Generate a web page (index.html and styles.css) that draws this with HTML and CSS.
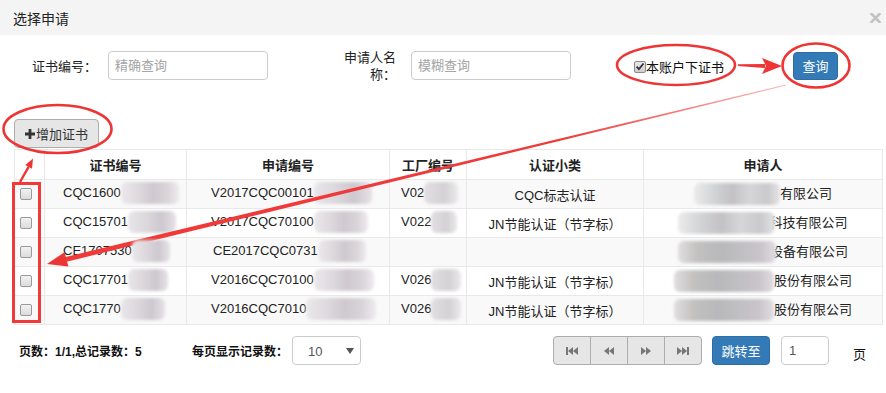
FILE: index.html
```html
<!DOCTYPE html>
<html lang="zh-CN">
<head>
<meta charset="utf-8">
<title>选择申请</title>
<link rel="stylesheet" href="styles.css">
</head>
<body>
<div class="modal">
  <div class="modal-header">
    <span class="modal-title">选择申请</span>
    <svg class="close" width="11" height="10" viewBox="0 0 11 10"><path d="M1.5 1 L9.5 9 M9.5 1 L1.5 9" stroke="#c2c2c2" stroke-width="2.6" stroke-linecap="square"/></svg>
  </div>

  <div class="search-row">
    <label class="lbl lbl-cert">证书编号：</label>
    <input class="txt txt-cert" type="text" placeholder="精确查询">
    <label class="lbl lbl-app">申请人名称：</label>
    <input class="txt txt-app" type="text" placeholder="模糊查询">
    <span class="own">
      <span class="chk chk-on"><svg width="11" height="11" viewBox="0 0 11 11"><path d="M1.8 5.6 L4.3 8.3 L9.4 2.2" fill="none" stroke="#333" stroke-width="2"/></svg></span>本账户下证书
    </span>
    <button class="btn btn-primary btn-query">查询</button>
  </div>

  <div class="tool-row">
    <button class="btn btn-default btn-add"><svg class="plus" width="10" height="10" viewBox="0 0 10 10"><path d="M3.6 0h2.8v3.6H10v2.8H6.4V10H3.6V6.4H0V3.6h3.6z" fill="#333"/></svg>增加证书</button>
  </div>

  <table class="grid">
    <colgroup>
      <col class="c-chk"><col class="c-cert"><col class="c-app"><col class="c-fac"><col class="c-type"><col class="c-man">
    </colgroup>
    <thead>
      <tr><th></th><th>证书编号</th><th>申请编号</th><th>工厂编号</th><th>认证小类</th><th>申请人</th></tr>
    </thead>
    <tbody>
      <tr>
        <td class="td-chk"><span class="chk"></span></td>
        <td class="td-cert">CQC1600<span class="blur b1" style="width:58px"></span></td>
        <td class="td-app">V2017CQC00101<span class="blur b2" style="width:58px"></span></td>
        <td class="td-fac">V02<span class="blur b3" style="width:34px"></span></td>
        <td class="td-type">CQC标志认证</td>
        <td class="td-man"><span class="blur b4" style="width:86px"></span>有限公司</td>
      </tr>
      <tr>
        <td class="td-chk"><span class="chk"></span></td>
        <td class="td-cert">CQC15701<span class="blur b2" style="width:48px"></span></td>
        <td class="td-app">V2017CQC70100<span class="blur b1" style="width:54px"></span></td>
        <td class="td-fac">V022<span class="blur b3 over" style="width:26px"></span></td>
        <td class="td-type">JN节能认证（节字标）</td>
        <td class="td-man"><span class="blur b4 over" style="width:97px"></span>科技有限公司</td>
      </tr>
      <tr>
        <td class="td-chk"><span class="chk"></span></td>
        <td class="td-cert">CE1707530<span class="blur b2 over" style="width:38px"></span></td>
        <td class="td-app app-ce">CE2017CQC0731<span class="blur b1 over" style="width:48px"></span></td>
        <td class="td-fac"></td>
        <td class="td-type"></td>
        <td class="td-man"><span class="blur b5 over" style="width:98px"></span>设备有限公司</td>
      </tr>
      <tr>
        <td class="td-chk"><span class="chk"></span></td>
        <td class="td-cert">CQC17701<span class="blur b2" style="width:40px"></span></td>
        <td class="td-app">V2016CQC70100<span class="blur b1" style="width:60px"></span></td>
        <td class="td-fac">V026<span class="blur b3" style="width:30px"></span></td>
        <td class="td-type">JN节能认证（节字标）</td>
        <td class="td-man"><span class="blur b5" style="width:100px"></span>股份有限公司</td>
      </tr>
      <tr>
        <td class="td-chk"><span class="chk"></span></td>
        <td class="td-cert">CQC1770<span class="blur b2" style="width:44px"></span></td>
        <td class="td-app">V2016CQC7010<span class="blur b1" style="width:70px"></span></td>
        <td class="td-fac">V026<span class="blur b3" style="width:30px"></span></td>
        <td class="td-type">JN节能认证（节字标）</td>
        <td class="td-man"><span class="blur b5" style="width:100px"></span>股份有限公司</td>
      </tr>
    </tbody>
  </table>

  <div class="pager">
    <span class="info">页数：1/1,总记录数：5</span>
    <span class="per">每页显示记录数：</span>
    <div class="select"><span>10</span><svg width="8" height="6" viewBox="0 0 8 6"><path d="M0 0h8L4 6z" fill="#555"/></svg></div>
    <div class="pages">
      <span class="pg"><svg width="12" height="8" viewBox="0 0 12 8"><path d="M0 0h2v8H0z M2 4L7 0v8z M7 4l5-4v8z" fill="#777"/></svg></span>
      <span class="pg"><svg width="10" height="8" viewBox="0 0 10 8"><path d="M0 4L5 0v8z M5 4l5-4v8z" fill="#777"/></svg></span>
      <span class="pg"><svg width="10" height="8" viewBox="0 0 10 8"><path d="M10 4L5 0v8z M5 4L0 0v8z" fill="#777"/></svg></span>
      <span class="pg"><svg width="12" height="8" viewBox="0 0 12 8"><path d="M10 0h2v8h-2z M10 4L5 0v8z M5 4L0 0v8z" fill="#777"/></svg></span>
    </div>
    <button class="btn btn-primary btn-jump">跳转至</button>
    <input class="txt page-input" type="text" value="1">
    <span class="unit">页</span>
  </div>
</div>

<svg class="annot" width="886" height="393" viewBox="0 0 886 393">
  <defs>
    <linearGradient id="fade" gradientUnits="userSpaceOnUse" x1="786" y1="85" x2="560" y2="140">
      <stop offset="0" stop-color="#f03a3a" stop-opacity="0.35"/>
      <stop offset="1" stop-color="#f03a3a" stop-opacity="1"/>
    </linearGradient>
  </defs>
  <ellipse cx="676" cy="65" rx="59" ry="20" fill="none" stroke="#ee3535" stroke-width="2.6"/>
  <ellipse cx="816" cy="65.5" rx="33.5" ry="22" fill="none" stroke="#ee3535" stroke-width="2.6"/>
  <ellipse cx="57.5" cy="129" rx="54" ry="24" fill="none" stroke="#ee3535" stroke-width="2.6"/>
  <polygon points="738,64.2 765,64 765,68 738,66" fill="#ee3535"/>
  <polygon points="762,58 782,66 762,74 766,66" fill="#ee3535"/>
  <polygon points="785.9,84.5 786.1,85.5 66.6,261.7 65.8,256.9" fill="url(#fade)"/>
  <polygon points="47,264 64.5,252.2 68.4,266.4" fill="#ee3535"/>
  <rect x="13.5" y="183.5" width="26" height="138" fill="none" stroke="#f03a3a" stroke-width="3"/>
  <line x1="20" y1="182" x2="28.6" y2="166.8" stroke="#ee3535" stroke-width="2.4"/>
  <polygon points="33,158.5 25.3,165 32,168.8" fill="#ee3535"/>
</svg>
</body>
</html>
```

FILE: styles.css
```css
* { box-sizing: border-box; }
html, body { margin: 0; padding: 0; background: #fff; }
body {
  font-family: "Liberation Sans", "Noto Sans CJK SC", sans-serif;
  font-size: 13px;
  color: #222;
  width: 886px;
  height: 393px;
  overflow: hidden;
  position: relative;
}

.modal-header {
  height: 35px;
  background: #f4f4f4;
  display: flex;
  align-items: center;
  justify-content: space-between;
  padding: 0 5px 0 13px;
}
.modal-title { font-size: 14px; color: #222; }

.search-row {
  margin-top: 16px;
  height: 29px;
  display: flex;
  align-items: center;
}
.lbl { color: #222; font-size: 13px; }
.lbl-cert { margin-left: 32px; width: 76px; }
.lbl-app { margin-left: 75px; width: 53px; text-align: right; line-height: 17px; }
.txt {
  height: 29px;
  border: 1px solid #ccc;
  border-radius: 4px;
  font-family: inherit;
  font-size: 13px;
  color: #555;
  padding: 0 11px 0 6px;
  outline: none;
  background: #fff;
}
.txt::placeholder { color: #a5a5a5; }
.txt-cert { margin-left: 0; width: 160px; }
.txt-app { margin-left: 15px; width: 160px; }

.own {
  margin-left: 63px;
  width: 159px;
  display: flex;
  align-items: center;
  font-size: 13px;
  color: #111;
  padding-top: 2px;
}
.chk {
  display: inline-block;
  width: 12px;
  height: 12px;
  border: 1px solid #9a9a9a;
  border-radius: 2px;
  background: linear-gradient(#f2f2f2, #dcdcdc);
}
.chk-on {
  width: 12px;
  height: 12px;
  margin-right: 0;
  display: inline-flex;
  align-items: center;
  justify-content: center;
  border-color: #8a8a8a;
  background: linear-gradient(#e8e8e8, #cfcfcf);
}
.chk-on svg { display: block; }

.btn {
  font-family: inherit;
  font-size: 13px;
  border-radius: 4px;
  padding: 0;
  height: 29px;
  cursor: pointer;
}
.btn-primary {
  background: #337ab7;
  border: 1px solid #2e6da4;
  color: #fff;
}
.btn-default {
  background: #e6e6e6;
  border: 1px solid #adadad;
  color: #333;
}
.btn-query { width: 45px; height: 28px; }

.tool-row {
  margin-top: 39px;
  padding-left: 14px;
  height: 30px;
}
.btn-add {
  width: 85px;
  display: inline-flex;
  align-items: center;
  justify-content: center;
  gap: 1px;
}
.plus { display: block; }

.grid {
  margin-left: 14px;
  width: 868px;
  border-collapse: collapse;
  table-layout: fixed;
  font-size: 13px;
}
.c-chk { width: 30px; }
.c-cert { width: 142px; }
.c-app { width: 203px; }
.c-fac { width: 77px; }
.c-type { width: 177px; }
.c-man { width: 239px; }

.grid th, .grid td {
  border: 1px solid #e8e8e8;
  padding: 0;
  vertical-align: middle;
  white-space: nowrap;
  overflow: hidden;
}
.grid thead tr { height: 30px; }
.grid tbody tr { height: 29px; }
.grid th { font-weight: bold; text-align: center; color: #222; }
.grid tbody tr:nth-child(odd) { background: #f9f9f9; }

.td-chk { padding-left: 5px !important; line-height: 0; }
.td-chk .chk { vertical-align: middle; }
.td-cert { padding-left: 18px !important; }
.td-app { padding-left: 24px !important; }
.app-ce { padding-left: 26px !important; }
.td-fac { padding-left: 11px !important; }
.td-type { text-align: center; }
.td-man { text-align: center; }

.blur {
  display: inline-block;
  height: 22px;
  vertical-align: middle;
  border-radius: 6px;
  filter: blur(1.6px);
  margin-top: -2px;
}
.blur.over { position: relative; z-index: 1; margin-right: -6px; }
.b1 { background: linear-gradient(90deg, #ebe8eb 0%, #ddd9dd 30%, #cfc9cf 55%, #d8d4d8 80%, #eeeaee 100%); }
.b2 { background: linear-gradient(90deg, #e9e6e9 0%, #dcd8dc 35%, #cdc8cf 70%, #e6e2e6 100%); }
.b3 { background: linear-gradient(90deg, #e2dfe2 0%, #d4d1d4 60%, #ebe8eb 100%); }
.b4 { background: linear-gradient(90deg, #ecebeb 0%, #d0d2d4 25%, #c3c1c4 45%, #d6d6d8 65%, #c9c9cc 85%, #e4e4e6 100%); }
.b5 { background: linear-gradient(90deg, #e0dede 0%, #c2c1c0 20%, #b8b7ba 45%, #c0bfc2 65%, #c9c5ca 85%, #e0dde1 100%); }

.pager {
  margin-top: 11px;
  height: 29px;
  display: flex;
  align-items: center;
  padding-left: 19px;
}
.info { width: 173px; font-weight: bold; font-size: 12px; color: #111; }
.per { width: 100px; font-weight: bold; font-size: 12px; color: #111; }
.select {
  width: 69px;
  height: 29px;
  border: 1px solid #ccc;
  border-radius: 4px;
  display: flex;
  align-items: center;
  justify-content: space-between;
  padding: 0 6px 0 15px;
  color: #555;
  font-size: 13px;
}
.select span { padding-top: 2px; }
.pages {
  margin-left: 192px;
  width: 149px;
  height: 29px;
  display: flex;
  border: 1px solid #adadad;
  border-radius: 4px;
  background: #e6e6e6;
  overflow: hidden;
}
.pg {
  flex: 1;
  display: flex;
  align-items: center;
  justify-content: center;
  border-left: 1px solid #adadad;
}
.pg:first-child { border-left: none; }
.btn-jump { margin-left: 10px; width: 58px; }
.page-input { margin-left: 11px; width: 48px; padding-left: 7px; }
.unit { margin-left: 24px; padding-top: 6px; font-size: 13px; color: #111; }

.annot {
  position: absolute;
  left: 0;
  top: 0;
  pointer-events: none;
}
```
